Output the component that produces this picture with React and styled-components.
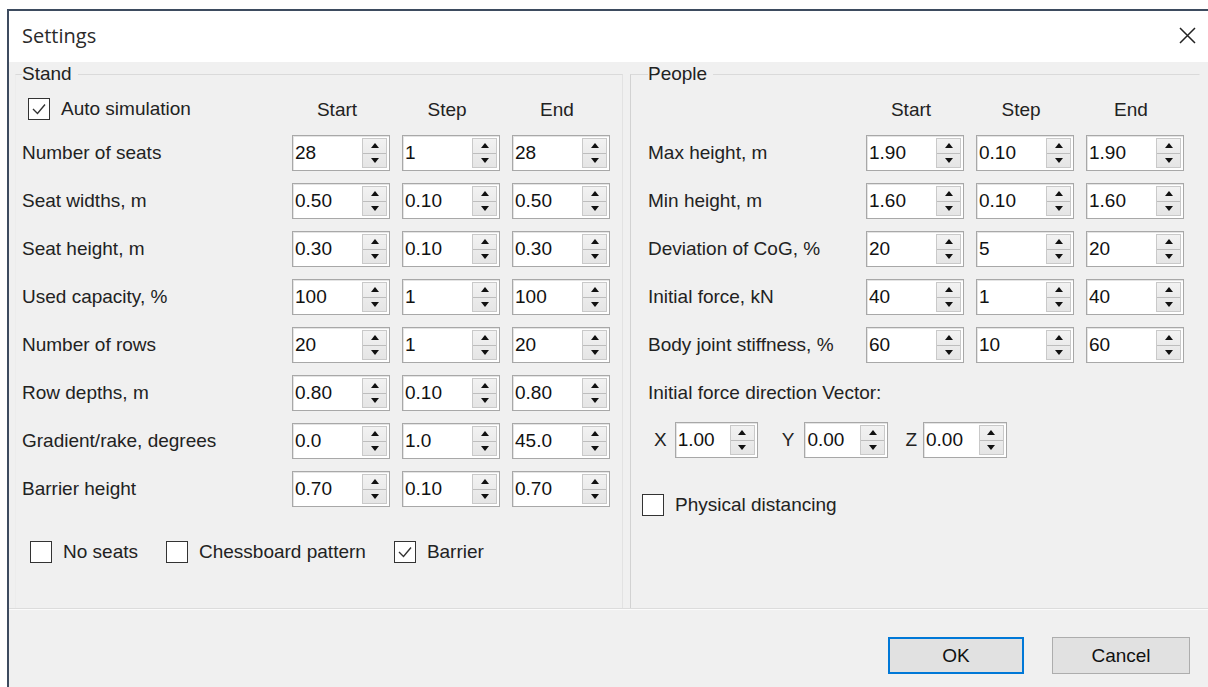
import React from 'react'
import styled, { createGlobalStyle } from 'styled-components'

const GlobalStyle = createGlobalStyle`
  html, body { margin: 0; padding: 0; background: #fff; overflow: hidden; }
  body { font-family: "Liberation Sans", Arial, sans-serif; }
  * { box-sizing: border-box; }
`

const standRows = [
    ['Number of seats', '28', '1', '28'],
    ['Seat widths, m', '0.50', '0.10', '0.50'],
    ['Seat height, m', '0.30', '0.10', '0.30'],
    ['Used capacity, %', '100', '1', '100'],
    ['Number of rows', '20', '1', '20'],
    ['Row depths, m', '0.80', '0.10', '0.80'],
    ['Gradient/rake, degrees', '0.0', '1.0', '45.0'],
    ['Barrier height', '0.70', '0.10', '0.70'],
]

const peopleRows = [
    ['Max height, m', '1.90', '0.10', '1.90'],
    ['Min height, m', '1.60', '0.10', '1.60'],
    ['Deviation of CoG, %', '20', '5', '20'],
    ['Initial force, kN', '40', '1', '40'],
    ['Body joint stiffness, %', '60', '10', '60'],
]

const Spin = ({ value, width }) => (
    <SpinBox $w={width}>
        <SpinValue>{value}</SpinValue>
        <SpinButtons>
            <SpinHalf>
                <svg width="8" height="5" viewBox="0 0 8 5"><path d="M0 5 L4 0 L8 5 Z" fill="#111" /></svg>
            </SpinHalf>
            <SpinHalf>
                <svg width="8" height="5" viewBox="0 0 8 5"><path d="M0 0 L8 0 L4 5 Z" fill="#111" /></svg>
            </SpinHalf>
        </SpinButtons>
    </SpinBox>
)

const Check = ({ checked, children }) => (
    <CheckItem>
        <Box>
            {checked && <svg width="18" height="18" viewBox="0 0 18 18">
                <polyline points="3,9 7.5,13.5 15,4.5" fill="none" stroke="#333" strokeWidth="1.4" />
            </svg>}
        </Box>
        {children}
    </CheckItem>
)

const App = () => {
    return <>
        <GlobalStyle />
        <Window>
            <TitleBar>
                <Title>Settings</Title>
                <svg width="17" height="17" viewBox="0 0 17 17">
                    <path d="M1 1 L16 16 M16 1 L1 16" stroke="#222" strokeWidth="1.5" />
                </svg>
            </TitleBar>

            <Groups>
                <StandGroup>
                    <Legend>Stand</Legend>
                    <Header $label={258}>
                        <AutoSim>
                            <Check checked>Auto simulation</Check>
                        </AutoSim>
                        <ColTitle>Start</ColTitle>
                        <ColTitle>Step</ColTitle>
                        <ColTitle>End</ColTitle>
                    </Header>
                    <Rows $label={258}>
                        {standRows.map(([label, ...vals]) => <React.Fragment key={label}>
                            <Label>{label}</Label>
                            {vals.map((v, i) => <Spin key={i} value={v} />)}
                        </React.Fragment>)}
                    </Rows>
                    <Options>
                        <Check>No seats</Check>
                        <Check>Chessboard pattern</Check>
                        <Check checked>Barrier</Check>
                    </Options>
                </StandGroup>

                <PeopleGroup>
                    <Legend>People</Legend>
                    <Header $label={206}>
                        <span />
                        <ColTitle>Start</ColTitle>
                        <ColTitle>Step</ColTitle>
                        <ColTitle>End</ColTitle>
                    </Header>
                    <Rows $label={206}>
                        {peopleRows.map(([label, ...vals]) => <React.Fragment key={label}>
                            <Label>{label}</Label>
                            {vals.map((v, i) => <Spin key={i} value={v} />)}
                        </React.Fragment>)}
                    </Rows>
                    <VectorTitle>Initial force direction Vector:</VectorTitle>
                    <VectorRow>
                        <Axis $before={6} $after={8}>X</Axis>
                        <Spin value="1.00" width={83} />
                        <Axis $before={24} $after={10}>Y</Axis>
                        <Spin value="0.00" width={84} />
                        <Axis $before={17} $after={6}>Z</Axis>
                        <Spin value="0.00" width={84} />
                    </VectorRow>
                    <Distancing>
                        <Check>Physical distancing</Check>
                    </Distancing>
                </PeopleGroup>
            </Groups>

            <Footer>
                <Button $w={136} $default>OK</Button>
                <Button $w={138}>Cancel</Button>
            </Footer>
        </Window>
    </>
}

const Window = styled.div`
    margin: 9px 0 0 7px;
    height: 678px;
    border-top: 2px solid #3d4b5f;
    border-left: 2px solid #3d4b5f;
    background: #f0f0f0;
    display: flex;
    flex-direction: column;
    overflow: hidden;
    color: #222;
    font-size: 19px;
`

const TitleBar = styled.div`
    height: 51px;
    flex: none;
    background: #fff;
    display: flex;
    align-items: center;
    justify-content: space-between;
    padding: 0 12px 3px 13px;
`

const Title = styled.span`
    font-family: "Open Sans", "Noto Sans", sans-serif;
    font-size: 20px;
    color: #2a2a2a;
`

const Groups = styled.div`
    flex: 1;
    display: flex;
    gap: 7px;
    padding: 0 8px 0 6px;
    min-height: 0;
`

const Group = styled.fieldset`
    margin: 0;
    min-width: 0;
    border: 1px solid transparent;
    border-top-color: #dadada;
    border-bottom: none;
`

const StandGroup = styled(Group)`
    width: 608px;
    flex: none;
    padding: 9px 0 0 6px;
    border-left-color: #ececec;
    border-right-color: #e2e2e2;
`

const PeopleGroup = styled(Group)`
    flex: 1;
    padding: 9px 0 0 17px;
    border-left-color: #d2d2d2;
`

const Legend = styled.legend`
    padding: 0 6px 0 0;
    font-size: 19px;
    line-height: 24px;
    color: #222;
`

const Grid = styled.div`
    display: grid;
    grid-template-columns: ${p => p.$label}px repeat(3, 98px);
    column-gap: 12px;
    align-items: center;
`

const Header = styled(Grid)`
    height: 30px;
    margin-bottom: 10px;
`

const AutoSim = styled.div`
    padding-left: 6px;
`

const Rows = styled(Grid)`
    grid-auto-rows: 36px;
    row-gap: 12px;
`

const ColTitle = styled.span`
    text-align: center;
    padding-right: 8px;
`

const Label = styled.span`
    white-space: nowrap;
`

const SpinBox = styled.div`
    width: ${p => p.$w || 98}px;
    height: 36px;
    display: flex;
    padding: 2px 2px 2px 0;
    background: #fff;
    border: 1px solid #a8a8a8;
    box-shadow: inset 1px 1px 0 #e4e4e4;
`

const SpinValue = styled.span`
    flex: 1;
    line-height: 30px;
    padding-left: 2px;
    color: #111;
`

const SpinButtons = styled.div`
    width: 25px;
    display: flex;
    flex-direction: column;
    border: 1px solid #c9c9c9;
    background: linear-gradient(#f2f2f2, #e5e5e5);
`

const SpinHalf = styled.div`
    flex: 1;
    display: flex;
    align-items: center;
    justify-content: center;

    & + & {
        border-top: 1px solid #bdbdbd;
    }
`

const CheckItem = styled.label`
    display: inline-flex;
    align-items: center;
    gap: 11px;
    white-space: nowrap;
`

const Box = styled.span`
    width: 22px;
    height: 22px;
    flex: none;
    display: inline-flex;
    align-items: center;
    justify-content: center;
    border: 1px solid #333;
    background: #fff;
`

const Options = styled.div`
    display: flex;
    align-items: center;
    gap: 28px;
    height: 26px;
    margin-top: 32px;
    padding-left: 8px;
`

const VectorTitle = styled.div`
    line-height: 24px;
    margin-top: 18px;
`

const VectorRow = styled.div`
    display: flex;
    align-items: center;
    margin-top: 17px;
`

const Axis = styled.span`
    margin: 0 ${p => p.$after}px 0 ${p => p.$before}px;
`

const Distancing = styled.div`
    display: flex;
    align-items: center;
    height: 26px;
    margin: 34px 0 0 -6px;
`

const Footer = styled.div`
    height: 79px;
    flex: none;
    display: flex;
    justify-content: flex-end;
    align-items: flex-start;
    gap: 28px;
    padding: 28px 18px 0 0;
    border-top: 1px solid #dcdcdc;
    box-shadow: inset 0 1px 0 #fbfbfb;
`

const Button = styled.button`
    width: ${p => p.$w}px;
    height: 37px;
    background: #e1e1e1;
    border: ${p => p.$default ? '2px solid #0078d7' : '1px solid #adadad'};
    font-family: "Liberation Sans", Arial, sans-serif;
    font-size: 19px;
    color: #111;
    padding: 0;
`

export default App
